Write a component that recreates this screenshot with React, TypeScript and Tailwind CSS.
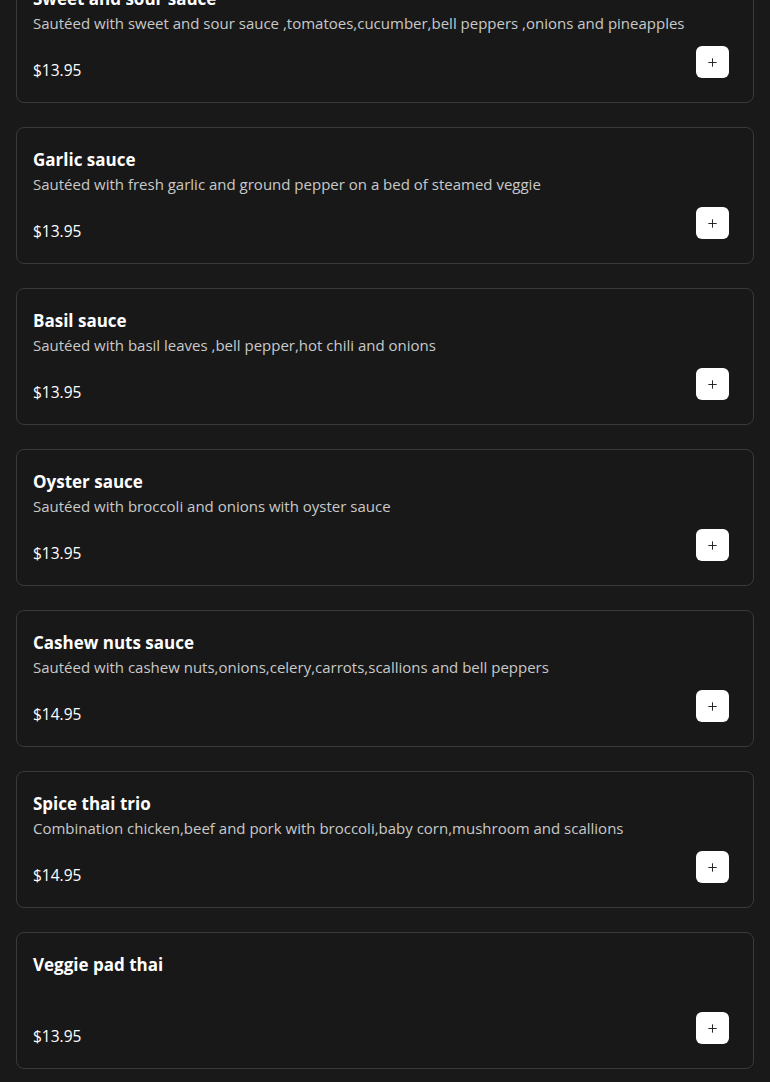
import React from 'react';
import { Plus } from 'lucide-react';

type Dish = {
  name: string;
  description: string;
  price: string;
};

const dishes: Dish[] = [
  {
    name: 'Sweet and sour sauce',
    description:
      'Sautéed with sweet and sour sauce ,tomatoes,cucumber,bell peppers ,onions and pineapples',
    price: '$13.95',
  },
  {
    name: 'Garlic sauce',
    description: 'Sautéed with fresh garlic and ground pepper on a bed of steamed veggie',
    price: '$13.95',
  },
  {
    name: 'Basil sauce',
    description: 'Sautéed with basil leaves ,bell pepper,hot chili and onions',
    price: '$13.95',
  },
  {
    name: 'Oyster sauce',
    description: 'Sautéed with broccoli and onions with oyster sauce',
    price: '$13.95',
  },
  {
    name: 'Cashew nuts sauce',
    description: 'Sautéed with cashew nuts,onions,celery,carrots,scallions and bell peppers',
    price: '$14.95',
  },
  {
    name: 'Spice thai trio',
    description: 'Combination chicken,beef and pork with broccoli,baby corn,mushroom and scallions',
    price: '$14.95',
  },
  {
    name: 'Veggie pad thai',
    description: '',
    price: '$13.95',
  },
];

function DishCard({ dish }: { dish: Dish; key?: React.Key }) {
  return (
    <div className="flex rounded-lg border border-[#3a3a3a] bg-[#181818] px-4 py-5">
      <div className="min-w-0 flex-1">
        <h3 className="text-[17px] font-bold leading-6 text-white">{dish.name}</h3>
        <p className="min-h-6 text-[15px] leading-6 text-[#c9c9c9]">{dish.description}</p>
        <p className="mt-[23px] text-[15.5px] leading-6 text-white">{dish.price}</p>
      </div>
      <div className="flex items-end pb-1 pr-2">
        <button
          type="button"
          className="flex h-8 w-[33px] items-center justify-center rounded-md bg-white text-[#222]"
        >
          <Plus size={13} strokeWidth={1.8} />
        </button>
      </div>
    </div>
  );
}

export default function App() {
  return (
    <div
      className="min-h-screen bg-[#191919] px-4 pb-6"
      style={{ fontFamily: '"Open Sans", "Noto Sans", sans-serif' }}
    >
      <div className="-mt-[34px] flex flex-col gap-6">
        {dishes.map((dish) => (
          <DishCard key={dish.name} dish={dish} />
        ))}
      </div>
    </div>
  );
}
